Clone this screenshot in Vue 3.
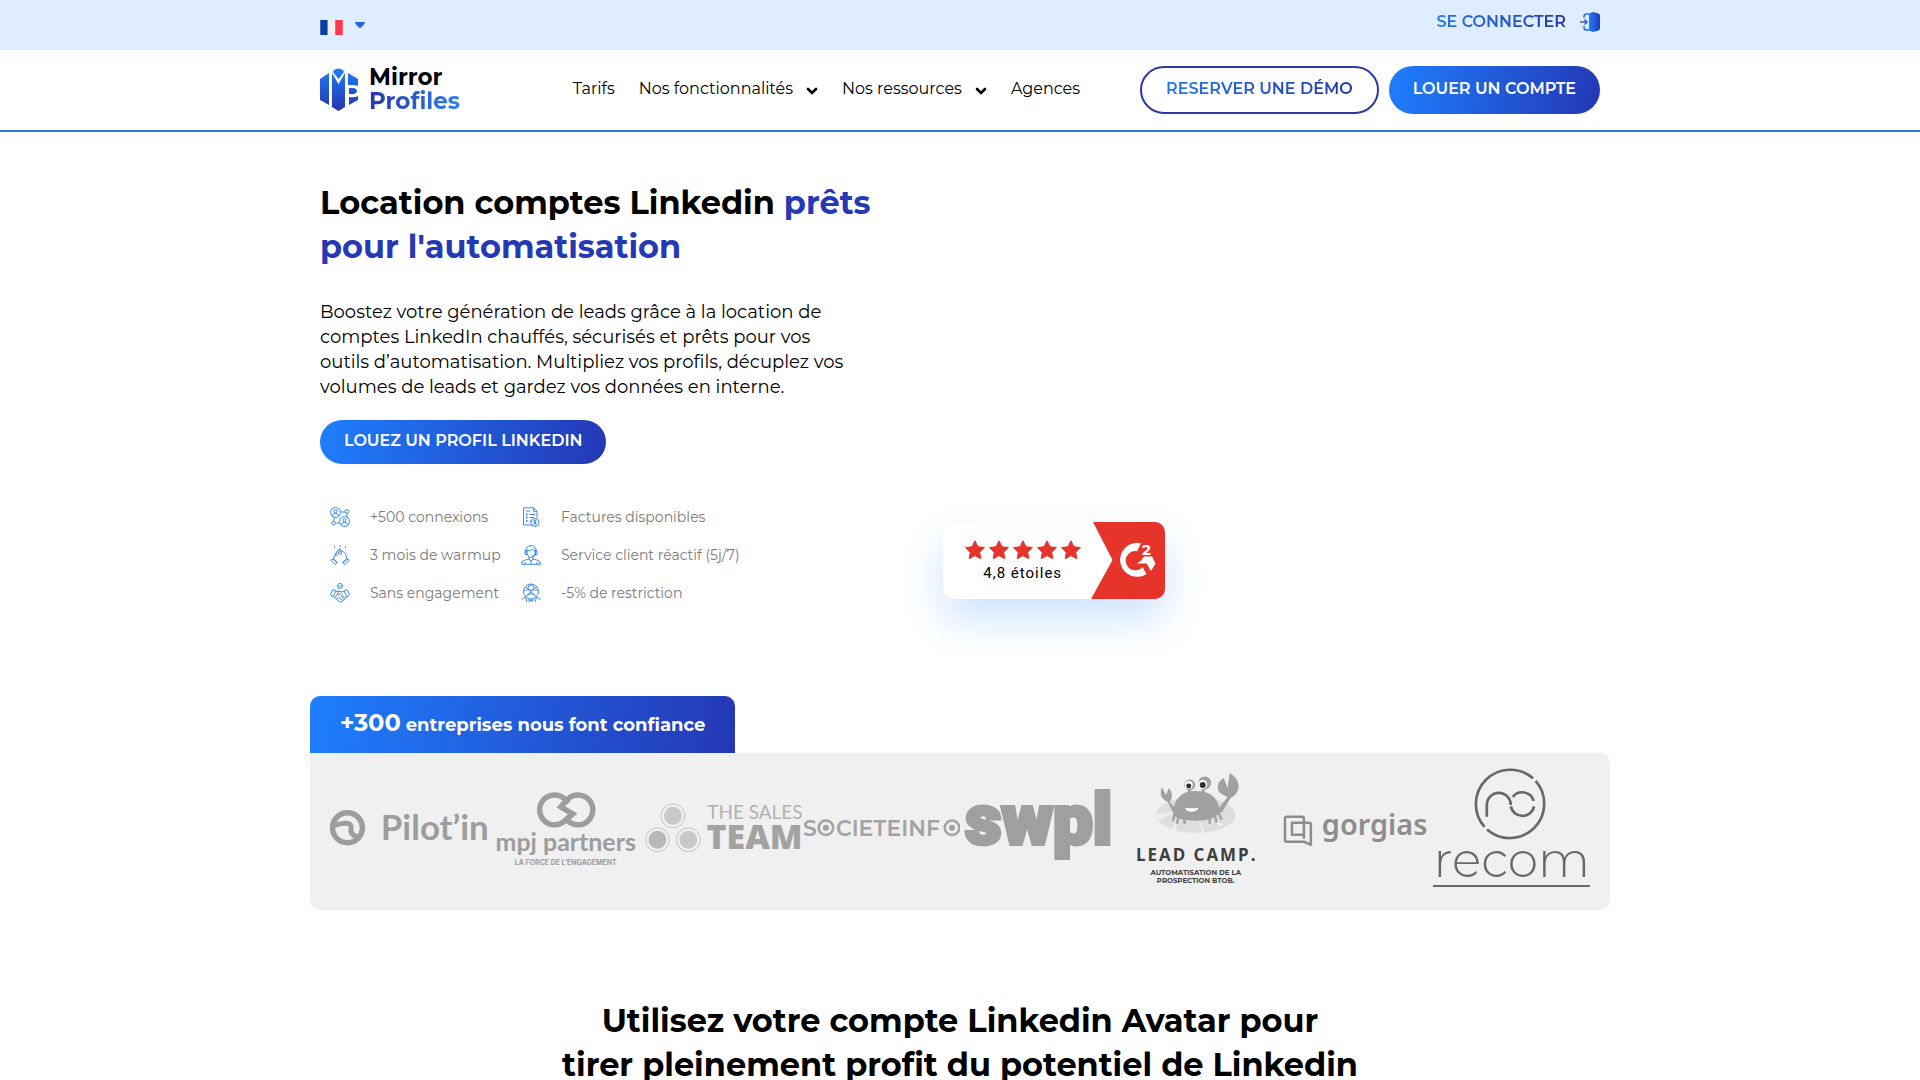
<script setup>
import { ref } from 'vue';

const language = ref('fr');

const navItems = [
  { label: 'Tarifs', hasMenu: false },
  { label: 'Nos fonctionnalités', hasMenu: true },
  { label: 'Nos ressources', hasMenu: true },
  { label: 'Agences', hasMenu: false },
];

const features = [
  { icon: 'network', label: '+500 connexions' },
  { icon: 'invoice', label: 'Factures disponibles' },
  { icon: 'clap', label: '3 mois de warmup' },
  { icon: 'support', label: 'Service client réactif (5j/7)' },
  { icon: 'handshake', label: 'Sans engagement' },
  { icon: 'restriction', label: '-5% de restriction' },
];
</script>

<template>
  <div class="page">
    <div class="top-bar">
      <div class="container top-bar-inner">
        <div class="language">
          <svg class="flag" viewBox="0 0 24 16" aria-hidden="true">
            <rect width="8" height="16" fill="#0a3fa8" />
            <rect x="8" width="8" height="16" fill="#efefef" />
            <rect x="16" width="8" height="16" fill="#ff3648" />
          </svg>
          <svg class="caret" viewBox="0 0 10 6" aria-hidden="true">
            <path d="M1 0H9Q10.500 .5 9.500 2L6 5.500Q5 6.300 4 5.500L.5 2Q-.5 .5 1 0z" fill="#2463dd" />
          </svg>
          <select v-model="language" class="language-select" aria-label="Langue">
            <option value="fr">Français</option>
            <option value="en">English</option>
          </select>
        </div>
        <a href="#" class="login">
          <span class="gradient-text">SE CONNECTER</span>
          <svg class="login-icon" viewBox="0 0 20 20" aria-hidden="true">
            <defs>
              <linearGradient id="door" x1="0" x2="1">
                <stop offset="0" stop-color="#1e7fff" />
                <stop offset="1" stop-color="#2437b5" />
              </linearGradient>
            </defs>
            <path d="M9 1.500L13 0 18.500 1.500Q20 2.200 20 4v12q0 1.800-1.500 2.500L13 20 9 18.500z" fill="url(#door)" />
            <path d="M9 2H6.500Q4 2 4 4.500V6M9 18H6.500Q4 18 4 15.500V14" fill="none" stroke="#2470e8" stroke-width="1.500" />
            <path d="M0 10h6.500M4.500 7.500L7 10l-2.500 2.500" fill="none" stroke="#2463dd" stroke-width="1.500" />
          </svg>
        </a>
      </div>
    </div>

    <header class="header">
      <div class="container header-inner">
        <a href="#" class="brand">
          <svg class="brand-mark" viewBox="0 0 38 43" aria-hidden="true">
            <defs>
              <linearGradient id="mark" x1="0" x2="0" y1="0" y2="43" gradientUnits="userSpaceOnUse">
                <stop offset="0" stop-color="#1e7fff" />
                <stop offset="1" stop-color="#2633ae" />
              </linearGradient>
            </defs>
            <g fill="url(#mark)">
              <path d="M0 11L9 5v32L0 32z" />
              <path d="M12 5l6.500 11L25 5v34l-6.500 4L12 39z" />
              <path d="M14 2q4.500-3 9 0L24 4l-5.500 7L13 4z" />
              <path d="M28 5l10 6v7q-3-1.500-10-1z" />
              <path d="M29 20h5q3 1 3 3t-3 3h-5z" />
              <path d="M29 29q6 1 9-1v4l-9 5z" />
            </g>
          </svg>
          <span class="brand-name">
            <span>Mirror</span>
            <span class="brand-second">Profiles</span>
          </span>
        </a>

        <nav class="nav">
          <a v-for="item in navItems" :key="item.label" href="#" class="nav-link">
            {{ item.label }}
            <svg v-if="item.hasMenu" class="chevron" viewBox="0 0 12 8" aria-hidden="true">
              <path d="M2 2l4 4 4-4" fill="none" stroke="#000" stroke-width="2.600" stroke-linecap="round" />
            </svg>
          </a>
        </nav>

        <div class="header-actions">
          <a href="#" class="btn btn-outline"><span class="gradient-text">RESERVER UNE DÉMO</span></a>
          <a href="#" class="btn btn-primary">LOUER UN COMPTE</a>
        </div>
      </div>
    </header>

    <main>
      <section class="container hero">
        <div class="hero-text">
          <h1>Location comptes Linkedin <span>prêts pour l'automatisation</span></h1>
          <p>
            Boostez votre génération de leads grâce à la location de
            comptes LinkedIn chauffés, sécurisés et prêts pour vos
            outils d’automatisation. Multipliez vos profils, décuplez vos
            volumes de leads et gardez vos données en interne.
          </p>
          <a href="#" class="btn btn-primary btn-hero">LOUEZ UN PROFIL LINKEDIN</a>

          <ul class="features">
            <li v-for="feature in features" :key="feature.icon">
              <svg class="feature-icon" viewBox="0 0 20 20" aria-hidden="true">
                <g v-if="feature.icon === 'network'">
                  <circle cx="5.500" cy="5.500" r="5" />
                  <circle cx="5.500" cy="4.200" r="1.600" />
                  <path d="M2.800 8.800V7.500q2.700-2.500 5.400 0v1.300" />
                  <circle cx="14.500" cy="14.500" r="5" />
                  <circle cx="14.500" cy="13.200" r="1.600" />
                  <path d="M11.800 17.800v-1.300q2.700-2.500 5.400 0v1.300" />
                  <circle cx="17" cy="4.500" r="1.800" />
                  <circle cx="3.500" cy="16" r="1.800" />
                  <path d="M10.500 5h4.700M17 6.300V10M4 10.500v3.700M5.300 16h4.400" />
                </g>
                <g v-else-if="feature.icon === 'invoice'">
                  <path d="M11 18H2.500V.8h10l3.500 3.500V11M12.500.8v3.500H16M5 4h4M8.500 7.500H14M8.500 10.500H13M8.500 14H10" />
                  <path d="M5 7.500h1.500M5 10.500h1.500M5 14h1.500" stroke-width="2" />
                  <circle cx="14" cy="15.500" r="4" />
                  <path d="M15.500 14q-3-1-3 .5t2.500 1q1.500 1.500-2.500 1.500M14 12.800v5.400" />
                </g>
                <g v-else-if="feature.icon === 'clap'">
                  <path d="M3.500 14.500L6 8l3-4q1.500-1 1.500 1L8 9.500M10.500 5l5 3.500 1.500 6M4.500 11L8 5.500M6.500 11l4-5M12 6l-1.500 4M3.500 14.500l4 3M17 14.500l-4 3" />
                  <path d="M.6 15l2.900-1 4 3.500-2.500 2zM19.400 15l-2.900-1-4 3.500 2.500 2zM4 .8l1 2M10 0v2M16 .8l-1 2" />
                </g>
                <g v-else-if="feature.icon === 'support'">
                  <path d="M5 7q-.5-6 5-6.400Q15.500 1 15 7" />
                  <path d="M6 5.500q4 1 5.500-1.500 1 2 2.500 1.500v3q-1 4-4 4t-4-4z" />
                  <path d="M4 5.500h1.500v4H4zM14.500 5.500H16v4h-1.500zM15 9.500q0 2-4 1.500M8 12v2l2 2 2-2v-2M8 14l-5.500 1.500Q.6 16.500.6 19.300h18.800q0-2.800-1.900-3.800L12 14M10 16v3M4 17v2M16 17v2" />
                </g>
                <g v-else-if="feature.icon === 'handshake'">
                  <circle cx="10" cy="3" r="2.500" />
                  <path d="M8.500 3l1 1 2-2M.6 12L3 6.500l3 1.500-3 6zM19.400 12L17 6.500 14 8l3 6zM6 8.500l3-.5 2 1 3-.5M3.500 14l2 1.500 5 4 5-4 1.500-2M9 8l-2 3q1 2 3-.5l5.500 5M11 13l3 3.500M9 14.500l3.500 3M5 14l2-2M6.500 16l2-2" />
                </g>
                <g v-else>
                  <circle cx="10" cy="8.500" r="7.500" />
                  <path d="M4.500 14l11-10.500M4.500 3.500L15.500 14M7 5q0-3 3-3t3 3v2H7zM6 12q4-3 8 0M3 8.500q1-3 3-1M17 8.500q-1-3-3-1" />
                  <path d="M.8 17q2-4 4-2l1 4M19.200 17q-2-4-4-2l-1 4M7 17h6M8 19.300l2-2.300 2 2.300" />
                </g>
              </svg>
              {{ feature.label }}
            </li>
          </ul>
        </div>

        <div class="hero-side">
          <div class="review">
            <div class="review-score">
              <div class="stars">
                <svg v-for="n in 5" :key="n" viewBox="0 0 20 20" aria-hidden="true">
                  <path d="M10 .8l2.900 5.900 6.500.9-4.700 4.600 1.100 6.500L10 15.600l-5.800 3.100 1.100-6.500L.6 7.600l6.500-.9z" fill="#e7342a" stroke="#e7342a" stroke-linejoin="round" />
                </svg>
              </div>
              <span>4,8 étoiles</span>
            </div>
            <svg class="review-source" viewBox="0 0 74 77" aria-label="G2">
              <path d="M2 0h72v77H0l21.500-39z" fill="#e7342a" />
              <path d="M50 21.300A17 17 0 1 0 55.500 52l-4-7A9.600 9.600 0 1 1 46 29.200z" fill="#fff" />
              <path d="M50 38.500l3-4h8l3.500 7-4.500 7.500-4.500-7.500H46z" fill="#fff" />
              <text x="51" y="33" font-size="15" font-weight="700" fill="#fff">2</text>
            </svg>
          </div>
        </div>
      </section>

      <section class="trust">
        <h2 class="trust-title"><strong>+300</strong> entreprises nous font confiance</h2>
        <div class="logos">
          <svg viewBox="0 0 158 120" aria-label="Pilot'in">
            <g fill="none" stroke="#9d9d9d">
              <circle cx="17.500" cy="60" r="15" stroke-width="5.500" />
              <path d="M4 58q7-3 13-2.500 5 0 4 6t10 9" stroke-width="5" />
            </g>
            <text x="51" y="72" font-size="35" font-weight="700" font-family="Lato, sans-serif" fill="#9d9d9d">Pilot’in</text>
          </svg>

          <svg viewBox="0 0 158 120" aria-label="mpj partners">
            <path d="M80 53A15 15 0 1 0 80 31L73 39 85 46 77 53A15 15 0 1 1 77 31L81 35" fill="none" stroke="#9d9d9d" stroke-width="5.500" />
            <text x="78" y="83" font-size="25" text-anchor="middle" font-weight="700" font-family="Lato, sans-serif" fill="#9d9d9d">mpj partners</text>
            <text x="78" y="97" font-size="7" text-anchor="middle" font-weight="700" font-family="Inter, sans-serif" fill="#9d9d9d">LA FORCE DE L’ENGAGEMENT</text>
          </svg>

          <svg viewBox="0 0 158 120" aria-label="The Sales Team">
            <g fill="#c8c8c8">
              <circle cx="28" cy="48" r="9" />
              <circle cx="12.500" cy="72" r="9" fill="#b9b9b9" />
              <circle cx="43.500" cy="72" r="9" />
            </g>
            <g fill="none" stroke="#c4c4c4">
              <circle cx="28" cy="48" r="12" />
              <circle cx="12.500" cy="72" r="12" />
              <circle cx="43.500" cy="72" r="12" />
            </g>
            <text x="158" y="51" font-size="19" text-anchor="end" font-family="Lato, sans-serif" fill="#b0b0b0">THE SALES</text>
            <text x="158" y="81" font-size="34" text-anchor="end" font-weight="800" font-family="Open Sans, sans-serif" fill="#a3a3a3">TEAM</text>
          </svg>

          <svg viewBox="0 0 158 120" aria-label="Societeinfo">
            <g font-size="22" font-weight="600" fill="#a3a3a3">
              <text x="0" y="68">S</text>
              <text x="33" y="68">CIETEINF</text>
            </g>
            <g fill="none" stroke="#a3a3a3" stroke-width="2.500">
              <circle cx="23" cy="60" r="7.300" />
              <circle cx="149.500" cy="60" r="7.300" />
            </g>
            <circle cx="23" cy="60" r="3" fill="#a3a3a3" />
            <circle cx="149.500" cy="60" r="3" fill="#a3a3a3" />
          </svg>

          <svg viewBox="0 0 158 120" aria-label="swpl">
            <text x="79" y="76" font-size="71" text-anchor="middle" font-weight="900" font-family="Roboto, sans-serif" fill="#9f9f9f" stroke="#9f9f9f" stroke-width="4">swpl</text>
          </svg>

          <svg viewBox="0 0 158 120" aria-label="Lead Camp">
            <ellipse cx="78" cy="47" rx="40" ry="18" fill="#dedede" />
            <path d="M38 47l22-4-20 10zM54 62l6-14-2 16zM84 64l-3-13 6 12zM102 59l-9-12 12 10z" fill="#efefef" />
            <g fill="#a1a1a1">
              <path d="M55 45Q57 23 78 23q22 0 24 20-3 10-24 10-20 0-23-8z" />
              <path d="M50 34q-10-4-6-15l4 8 3-7q6 7 1 14l8 10-3 4z" />
              <path d="M110 29q-13-4-9-14 2-4 5-5l4 10 2-15q9 5 9 14-1 8-8 11l-9 15-5-2z" />
              <circle cx="72" cy="17" r="5.500" />
              <circle cx="87" cy="15" r="6.500" />
              <path d="M70 20h3v6h-3zM84 19h3v6h-3z" />
            </g>
            <path d="M57 46l-2 7M61 48l-2 8M66 49l1 7M92 49v7M97 47l2 8M101 45l3 7" stroke="#a1a1a1" stroke-width="2.500" />
            <circle cx="71" cy="17" r="4" fill="#fff" />
            <circle cx="85" cy="16.500" r="4.500" fill="#fff" />
            <circle cx="71" cy="18" r="2.500" fill="#2f2f2f" />
            <circle cx="85" cy="17" r="3" fill="#2f2f2f" />
            <path d="M67 40q7 1 14 0-2 4-7 4t-7-4z" fill="#fff" />
            <text x="79" y="93" class="tracked" font-size="17" text-anchor="middle" font-weight="700" font-family="Open Sans, sans-serif" fill="#3f3f3f">LEAD CAMP.</text>
            <g font-size="7" text-anchor="middle" font-weight="700" fill="#3f3f3f">
              <text x="78" y="107">AUTOMATISATION DE LA</text>
              <text x="78" y="115">PROSPECTION BTOB.</text>
            </g>
          </svg>

          <svg viewBox="0 0 158 120" aria-label="gorgias">
            <path d="M29 71V51q0-2-2-2H12q-2 0-2 2v21q0 2 2 2h17l7 3V57q0-2-2-2H17v12h12" fill="none" stroke="#8d8d8d" stroke-width="2.500" stroke-linejoin="round" />
            <text x="47" y="67" font-size="29" font-weight="600" font-family="Noto Sans, sans-serif" fill="#8d8d8d">gorgias</text>
          </svg>

          <svg viewBox="0 0 158 120" aria-label="recom">
            <g fill="none" stroke="#686868" stroke-width="2.700">
              <path d="M100.400 10.400A34.500 34.500 0 0 0 51.700 59.100M54.200 61.600A34.500 34.500 0 0 0 102.900 12.900" />
              <path d="M54 49V37a12 12 0 0 1 24 0M78 38.500a12 12 0 0 0 23.500 0M80 29a12 12 0 0 1 21 4" />
              <path d="M0 118.500h158" stroke-width="2" />
            </g>
            <text x="79" y="109" font-size="49" text-anchor="middle" font-weight="300" fill="#686868">recom</text>
          </svg>
        </div>
      </section>

      <section class="container avatar">
        <h2>Utilisez votre compte Linkedin Avatar pour<br>tirer pleinement profit du potentiel de Linkedin</h2>
      </section>
    </main>
  </div>
</template>

<style>
body {
  margin: 0;
  background: #fff;
}
</style>

<style scoped>
.page {
  font-family: Montserrat, Inter, sans-serif;
  color: #000;
  overflow: hidden;
}

a {
  color: inherit;
  text-decoration: none;
}

.container {
  max-width: 1280px;
  margin: 0 auto;
  padding: 0 20px;
}

.gradient-text {
  background: linear-gradient(100deg, #2478ec, #2437a8);
  background-clip: text;
  color: transparent;
}

.top-bar {
  background: #deedff;
}

.top-bar-inner {
  display: flex;
  justify-content: space-between;
  height: 50px;
}

.language {
  position: relative;
  display: flex;
  align-items: center;
  gap: 12px;
  height: 50px;
}

.flag {
  width: 23px;
  height: 15px;
  margin-top: 4px;
}

.caret {
  width: 10px;
  height: 6px;
}

.language-select {
  position: absolute;
  inset: 0;
  width: 100%;
  opacity: 0;
  cursor: pointer;
}

.login {
  display: flex;
  align-items: center;
  gap: 14px;
  height: 43px;
  font-size: 16px;
  font-weight: 600;
}

.login-icon {
  width: 20px;
  height: 20px;
}

.header {
  border-bottom: 2px solid #2b7bdc;
}

.header-inner {
  display: flex;
  align-items: center;
  height: 80px;
}

.brand {
  display: flex;
  align-items: center;
  gap: 11px;
  padding-bottom: 2px;
}

.brand-mark {
  width: 38px;
  height: 43px;
}

.brand-name {
  display: flex;
  flex-direction: column;
  font-size: 23px;
  line-height: 24px;
  font-weight: 700;
}

.brand-second {
  background: linear-gradient(90deg, #2a35ad, #2a80f2);
  background-clip: text;
  color: transparent;
}

.nav {
  display: flex;
  gap: 24px;
  margin: 0 60px 0 auto;
  padding-bottom: 2px;
}

.nav-link {
  display: flex;
  align-items: center;
  gap: 13px;
  font-size: 16px;
  line-height: 24px;
}

.chevron {
  width: 12px;
  height: 8px;
  margin-top: 3px;
}

.header-actions {
  display: flex;
  gap: 10px;
}

.btn {
  box-sizing: border-box;
  display: inline-flex;
  align-items: center;
  justify-content: center;
  height: 48px;
  padding: 0 24px 4px;
  border-radius: 24px;
  font-size: 16px;
  font-weight: 600;
  white-space: nowrap;
}

.btn-outline {
  border: 2px solid #2a3aa5;
}

.btn-primary {
  background: linear-gradient(100deg, #1e7fff, #2437b5);
  color: #fff;
}

.btn-hero {
  height: 44px;
}

.hero {
  display: grid;
  grid-template-columns: 18fr 19fr;
}

.hero-text {
  padding-top: 49px;
}

h1 {
  max-width: 570px;
  margin: 0;
  font-size: 32px;
  line-height: 44px;
  font-weight: 700;
}

h1 span {
  color: #2639b5;
}

.hero-text p {
  max-width: 535px;
  margin: 31px 0 20px;
  font-size: 18px;
  line-height: 25px;
}

.features {
  display: grid;
  grid-template-columns: 191px 1fr;
  margin: 34px 0 0;
  padding: 0 0 0 10px;
  list-style: none;
  color: #7a7a7a;
  font-size: 14px;
}

.features li {
  display: flex;
  align-items: center;
  gap: 20px;
  height: 38px;
}

.feature-icon {
  width: 20px;
  height: 20px;
  fill: none;
  stroke: #3c8bea;
  stroke-width: 1;
}

.hero-side {
  display: flex;
  align-items: flex-end;
  padding-bottom: 13px;
}

.review {
  display: flex;
  height: 77px;
  border-radius: 10px;
  overflow: hidden;
  background: #fff;
  box-shadow: 0 20px 40px rgba(30, 127, 255, 0.22);
}

.review-score {
  display: flex;
  flex-direction: column;
  align-items: center;
  gap: 3px;
  padding: 18px 10px 0 22px;
  font-family: Roboto, sans-serif;
  font-size: 15px;
  line-height: 20px;
}

.review-score span {
  letter-spacing: 1px;
}

.stars {
  display: flex;
  gap: 4px;
}

.stars svg {
  width: 20px;
  height: 20px;
}

.review-source {
  width: 74px;
  height: 77px;
}

.trust {
  max-width: 1300px;
  margin: 84px auto 0;
}

.trust-title {
  display: inline-flex;
  align-items: baseline;
  gap: 5px;
  box-sizing: border-box;
  height: 57px;
  margin: 0;
  padding: 12px 30px 0;
  border-radius: 10px 10px 0 0;
  background: linear-gradient(100deg, #1e7fff, #2437b5);
  color: #fff;
  font-size: 18px;
  line-height: 30px;
  font-weight: 700;
  vertical-align: top;
}

.trust-title strong {
  font-size: 24px;
  font-weight: 700;
}

.logos {
  display: flex;
  align-items: center;
  padding: 15px 20px 22px;
  border-radius: 0 10px 10px 10px;
  background: #f0f0f0;
}

.logos svg {
  flex: 1;
  min-width: 0;
}

.tracked {
  letter-spacing: 2px;
}

.avatar {
  padding-top: 89px;
  text-align: center;
}

.avatar h2 {
  margin: 0;
  font-size: 32px;
  line-height: 44px;
  font-weight: 700;
}
</style>
